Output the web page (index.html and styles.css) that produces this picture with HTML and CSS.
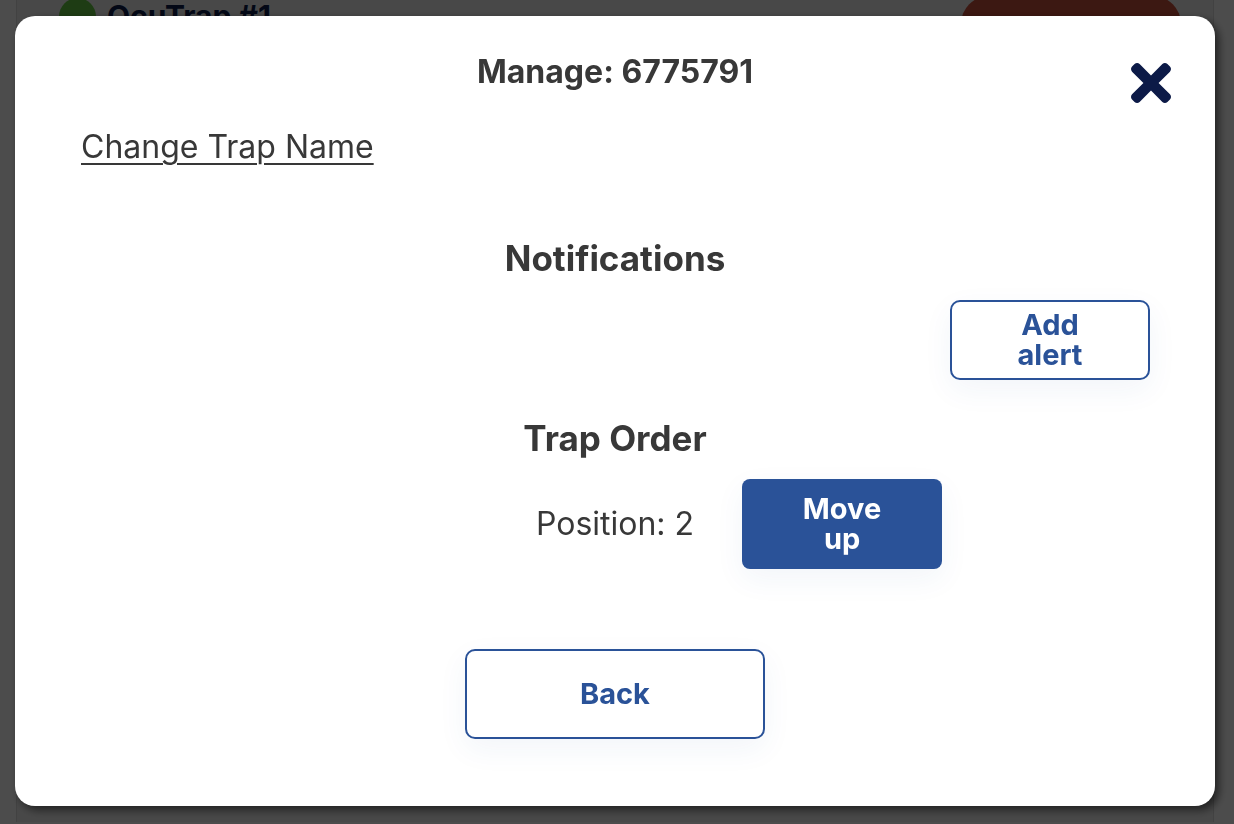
FILE: index.html
```html
<!DOCTYPE html>
<html lang="en">
<head>
  <meta charset="UTF-8" />
  <meta name="viewport" content="width=device-width, initial-scale=1.0"/>
  <title>Manage Trap</title>
  <link rel="stylesheet" href="styles.css">
</head>
<body>
  <div class="page">
    <div class="trap-row">
      <span class="status-dot"></span>
      <span class="trap-name">OcuTrap #1</span>
      <button class="danger-btn">Remove</button>
    </div>
  </div>

  <div class="overlay">
    <div class="modal">
      <button class="close-btn" aria-label="Close">
        <svg viewBox="0 80 352 352" width="40" height="40">
          <path fill="currentColor" d="M242.72 256l100.07-100.07c12.28-12.28 12.28-32.19 0-44.48l-22.24-22.24c-12.28-12.28-32.19-12.28-44.48 0L176 189.28 75.930 89.21c-12.28-12.280-32.19-12.28-44.48 0L9.21 111.45c-12.28 12.28-12.28 32.19 0 44.48L109.28 256 9.21 356.07c-12.28 12.28-12.28 32.19 0 44.48l22.24 22.24c12.28 12.28 32.2 12.28 44.48 0L176 322.72l100.07 100.07c12.28 12.28 32.2 12.28 44.48 0l22.24-22.24c12.28-12.28 12.28-32.19 0-44.48L242.72 256z"/>
        </svg>
      </button>

      <h2 class="modal-title">Manage: 6775791</h2>
      <a href="#" class="rename-link">Change Trap Name</a>

      <div class="section">
        <h3 class="section-title">Notifications</h3>
        <button class="btn btn-outline btn-alert">Add alert</button>
      </div>

      <div class="section">
        <h3 class="section-title order-title">Trap Order</h3>
        <div class="order-row">
          <span class="position">Position: 2</span>
          <button class="btn btn-solid btn-move">Move up</button>
        </div>
      </div>

      <button class="btn btn-outline btn-back">Back</button>
    </div>
  </div>
</body>
</html>
```

FILE: styles.css
```css
body {
  font-family: Inter, 'Noto Sans', sans-serif;
  background: #fff;
  margin: 0;
  height: 100vh;
  overflow: hidden;
}

.page {
  margin: 0 20px 0 16px;
  height: 100%;
  background: #f0f0f0;
  border-left: 1px solid #dcdcdc;
  border-right: 1px solid #dcdcdc;
}

.trap-row {
  display: flex;
  align-items: center;
  height: 36px;
  padding: 0 32px 0 42px;
  margin-top: -2px;
}

.status-dot {
  width: 37px;
  height: 37px;
  border-radius: 50%;
  background: #66c845;
}

.trap-name {
  margin-left: 11px;
  font-size: 30px;
  font-weight: 700;
  color: #0d1b4a;
}

.danger-btn {
  margin-left: auto;
  width: 220px;
  height: 60px;
  margin-top: 20px;
  border: none;
  border-radius: 28px;
  background: #c8503c;
}

.overlay {
  position: fixed;
  inset: 0;
  background: rgba(0, 0, 0, 0.7);
}

.modal {
  position: relative;
  box-sizing: border-box;
  width: 1200px;
  height: 790px;
  margin: 16px 0 0 15px;
  padding: 0 66px;
  background: #fff;
  border-radius: 20px;
  box-shadow: 4px 4px 8px rgba(0, 0, 0, 0.55);
  display: flex;
  flex-direction: column;
  color: #383838;
}

.close-btn {
  position: absolute;
  top: 47px;
  right: 44px;
  padding: 0;
  border: none;
  background: none;
  color: #0c1a47;
  cursor: pointer;
  line-height: 0;
}

.modal-title {
  margin: 38px 0 0;
  font-size: 32px;
  line-height: 36px;
  font-weight: 700;
  text-align: center;
}

.rename-link {
  align-self: flex-start;
  margin-top: 38px;
  font-size: 32px;
  line-height: 38px;
  color: #383838;
  text-underline-offset: 5px;
  text-decoration-thickness: 2px;
}

.section {
  display: flex;
  flex-direction: column;
}

.section-title {
  margin: 73px 0 0;
  font-size: 35px;
  line-height: 38px;
  font-weight: 700;
  text-align: center;
}

.order-title {
  margin-top: 39px;
}

.btn {
  box-sizing: border-box;
  font-family: inherit;
  font-size: 29px;
  line-height: 30px;
  font-weight: 700;
  border-radius: 10px;
  cursor: pointer;
  box-shadow: 0 10px 30px rgba(42, 82, 152, 0.06);
}

.btn-outline {
  background: #fff;
  color: #2a5298;
  border: 2px solid #2a5298;
}

.btn-solid {
  background: #2a5298;
  color: #fff;
  border: none;
  border-radius: 8px;
}

.btn-alert {
  align-self: flex-end;
  width: 200px;
  height: 80px;
  margin: 23px -1px 0 0;
  padding: 0 40px;
}

.order-row {
  display: grid;
  grid-template-columns: 1fr auto 1fr;
  align-items: center;
  margin-top: 22px;
}

.position {
  grid-column: 2;
  font-size: 32px;
  line-height: 38px;
}

.btn-move {
  justify-self: start;
  width: 200px;
  height: 90px;
  margin-left: 48px;
  padding: 0 50px;
}

.btn-back {
  align-self: center;
  width: 300px;
  height: 90px;
  margin-top: 80px;
}
```
